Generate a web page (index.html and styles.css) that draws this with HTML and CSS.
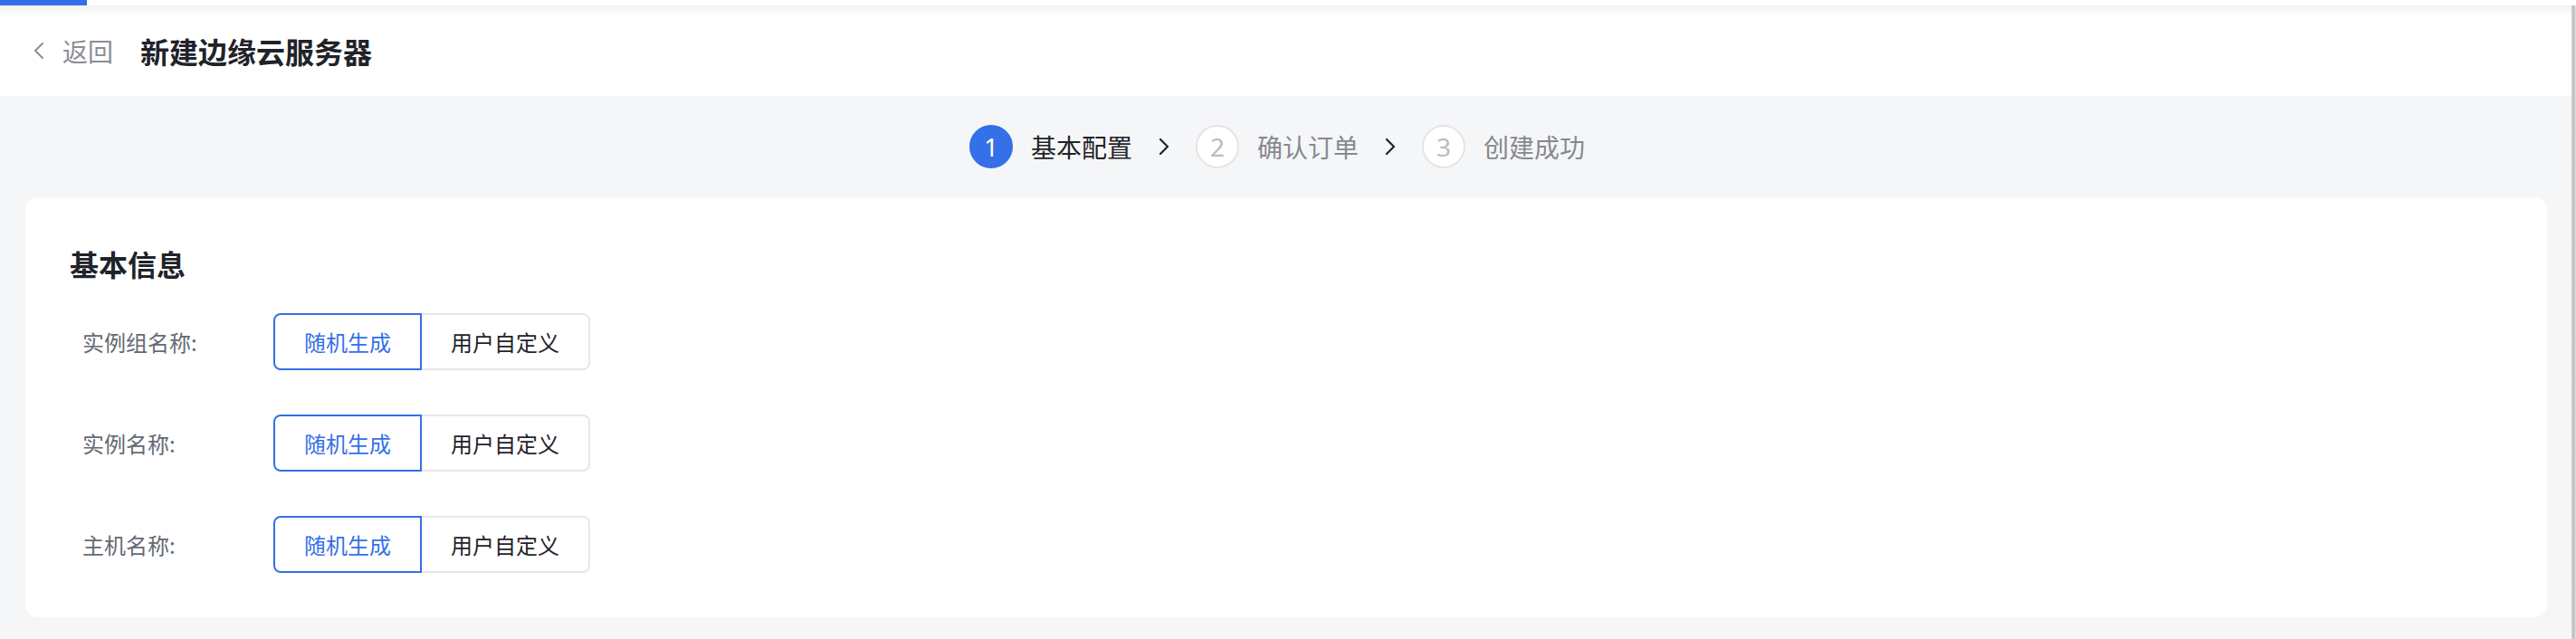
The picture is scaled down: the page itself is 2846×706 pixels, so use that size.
FILE: index.html
```html
<!DOCTYPE html>
<html lang="zh-CN">
<head>
<meta charset="utf-8">
<title>新建边缘云服务器</title>
<link rel="stylesheet" href="styles.css">
</head>
<body>
<div class="app">
  <div class="topline"><div class="progress"></div></div>
  <div class="shell">
    <div class="main">
      <header class="header">
        <a class="back">
          <svg class="back-icon" width="14" height="20" viewBox="0 0 14 20"><path d="M11 2 L3 10 L11 18" fill="none" stroke="#8a8e96" stroke-width="2" stroke-linecap="round" stroke-linejoin="round"/></svg>
          <span class="back-text">返回</span>
        </a>
        <h1 class="title">新建边缘云服务器</h1>
      </header>
      <div class="content">
        <div class="steps">
          <div class="step active"><span class="num">1</span><span class="label">基本配置</span></div>
          <svg class="arrow" width="14" height="20" viewBox="0 0 14 20"><path d="M3 2 L11 10 L3 18" fill="none" stroke="#1f2329" stroke-width="2.2" stroke-linecap="round" stroke-linejoin="round"/></svg>
          <div class="step"><span class="num">2</span><span class="label">确认订单</span></div>
          <svg class="arrow" width="14" height="20" viewBox="0 0 14 20"><path d="M3 2 L11 10 L3 18" fill="none" stroke="#1f2329" stroke-width="2.2" stroke-linecap="round" stroke-linejoin="round"/></svg>
          <div class="step"><span class="num">3</span><span class="label">创建成功</span></div>
        </div>
        <section class="card">
          <h2 class="card-title">基本信息</h2>
          <div class="rows">
            <div class="row">
              <span class="row-label">实例组名称:</span>
              <div class="seg"><span class="seg-btn on">随机生成</span><span class="seg-btn">用户自定义</span></div>
            </div>
            <div class="row">
              <span class="row-label">实例名称:</span>
              <div class="seg"><span class="seg-btn on">随机生成</span><span class="seg-btn">用户自定义</span></div>
            </div>
            <div class="row">
              <span class="row-label">主机名称:</span>
              <div class="seg"><span class="seg-btn on">随机生成</span><span class="seg-btn">用户自定义</span></div>
            </div>
          </div>
        </section>
      </div>
    </div>
    <div class="scrollbar"></div>
  </div>
</div>
</body>
</html>
```

FILE: styles.css
```css
html, body {
  margin: 0;
  padding: 0;
}
body {
  width: 2846px;
  height: 706px;
  overflow: hidden;
  background: #f5f6f8;
  font-family: "Noto Sans CJK SC", "Noto Sans", sans-serif;
  color: #1f2329;
}
.app {
  display: flex;
  flex-direction: column;
  height: 706px;
}
.topline {
  height: 6px;
  background: #ffffff;
  display: flex;
}
.progress {
  width: 96px;
  height: 6px;
  background: #3470e8;
}
.shell {
  flex: 1;
  display: flex;
}
.main {
  flex: 1;
  display: flex;
  flex-direction: column;
}
.scrollbar {
  width: 5px;
  background: linear-gradient(90deg, #d6d6d6 0%, #bdbdbd 45%, #e2e2e2 100%);
}
.header {
  height: 100px;
  background: #ffffff;
  box-shadow: inset 0 12px 14px -10px rgba(0, 0, 0, 0.09);
  display: flex;
  align-items: center;
  padding-left: 36px;
  box-sizing: border-box;
}
.back {
  display: flex;
  align-items: center;
  gap: 19px;
  color: #8a8e96;
  font-size: 28px;
  line-height: 40px;
}
.back-icon {
  display: block;
}
.title {
  margin: 0 0 0 30px;
  font-size: 32px;
  line-height: 44px;
  font-weight: 700;
  color: #1f2329;
}
.content {
  flex: 1;
  display: flex;
  flex-direction: column;
  padding: 0 27px 0 28px;
}
.steps {
  height: 112px;
  display: flex;
  align-items: center;
  justify-content: center;
  gap: 28px;
  padding-right: 20px;
}
.step {
  display: flex;
  align-items: center;
  gap: 20px;
}
.num {
  width: 48px;
  height: 48px;
  box-sizing: border-box;
  border-radius: 50%;
  border: 2px solid #e4e5e8;
  background: #ffffff;
  color: #b9bcc2;
  font-size: 28px;
  display: flex;
  align-items: center;
  justify-content: center;
  font-family: "Noto Sans", "Inter", sans-serif;
}
.label {
  font-size: 28px;
  line-height: 40px;
  color: #86898f;
}
.step.active .num {
  background: #3470e8;
  border-color: #3470e8;
  color: #ffffff;
}
.step.active .label {
  color: #1f2329;
}
.arrow {
  display: block;
}
.card {
  background: #ffffff;
  border-radius: 14px;
  padding: 51px 50px 49px 49px;
}
.card-title {
  margin: 0 0 33px;
  font-size: 32px;
  line-height: 44px;
  font-weight: 700;
  color: #1f2329;
}
.rows {
  display: flex;
  flex-direction: column;
  gap: 49px;
  padding-left: 14px;
}
.row {
  display: flex;
  align-items: center;
}
.row-label {
  width: 211px;
  font-size: 24px;
  color: #646a73;
}
.seg {
  display: flex;
  height: 63px;
}
.seg-btn {
  display: flex;
  align-items: center;
  padding: 0 32px;
  font-size: 24px;
  color: #1f2329;
  background: #ffffff;
  border: 2px solid #e6e7ea;
  border-left: none;
  border-radius: 0 8px 8px 0;
}
.seg-btn.on {
  color: #3470e8;
  border: 2px solid #3470e8;
  border-radius: 8px 0 0 8px;
}
```
